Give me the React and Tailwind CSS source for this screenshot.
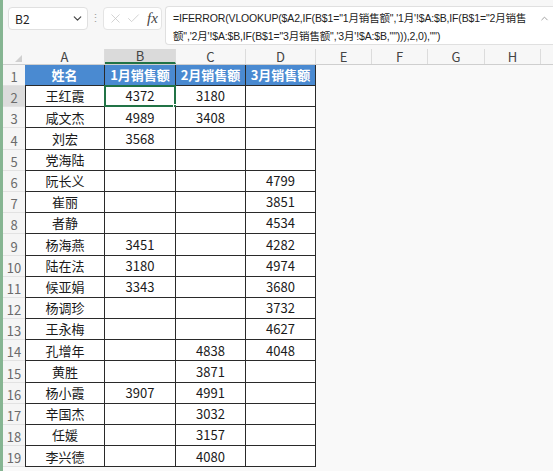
import { ChevronDown, X, Check, ChevronUp } from 'lucide-react';

const FONT = { fontFamily: '"Noto Sans CJK SC", "Noto Sans", sans-serif' };

const cols = [
  { key: 'A', w: 'w-[80px]' },
  { key: 'B', w: 'w-[71px]' },
  { key: 'C', w: 'w-[70px]' },
  { key: 'D', w: 'w-[70px]' },
];

const extraCols = [
  { key: 'E', w: 'w-[56px]' },
  { key: 'F', w: 'w-[56px]' },
  { key: 'G', w: 'w-[57px]' },
  { key: 'H', w: 'w-[56px]' },
];

const header = ['姓名', '1月销售额', '2月销售额', '3月销售额'];

const data = [
  ['王红霞', '4372', '3180', ''],
  ['咸文杰', '4989', '3408', ''],
  ['刘宏', '3568', '', ''],
  ['党海陆', '', '', ''],
  ['阮长义', '', '', '4799'],
  ['崔丽', '', '', '3851'],
  ['者静', '', '', '4534'],
  ['杨海燕', '3451', '', '4282'],
  ['陆在法', '3180', '', '4974'],
  ['候亚娟', '3343', '', '3680'],
  ['杨调珍', '', '', '3732'],
  ['王永梅', '', '', '4627'],
  ['孔增年', '', '4838', '4048'],
  ['黄胜', '', '3871', ''],
  ['杨小霞', '3907', '4991', ''],
  ['辛国杰', '', '3032', ''],
  ['任媛', '', '3157', ''],
  ['李兴德', '', '4080', ''],
];

const RowNum = ({ n, active }) => (
  <div
    className={`w-[22px] shrink-0 h-full flex items-end justify-center text-[13px] leading-[17px] text-[#6b6b6b] border-b border-[#e2e2e2] ${
      active ? 'bg-[#dcdcdc]' : 'bg-[#f5f5f5]'
    }`}
  >
    {n}
  </div>
);

export default function App() {
  return (
    <div className="w-[553px] h-[471px] overflow-hidden flex bg-[#f9f9f9]" style={FONT}>
      {/* green edge */}
      <div className="w-[3px] h-full shrink-0 bg-[#86b592]" />

      <div className="flex-1 flex flex-col min-w-0">
        {/* formula bar */}
        <div className="h-[49px] flex items-start pt-[6px] pl-[5px] bg-[#f7f7f7]">
          <div className="w-[80px] shrink-0 h-[23px] mt-[1px] bg-white border border-[#e0e0e0] rounded-[4px] flex items-center justify-between pl-[6px] pr-[3px]">
            <span className="text-[12px] text-[#222]">B2</span>
            <ChevronDown size={13} strokeWidth={2.2} className="text-[#444]" />
          </div>
          <div className="w-[15px] shrink-0 flex justify-center mt-[5px] text-[#a0a0a0] text-[11px] leading-[12px]">⋮</div>
          <div className="w-[59px] shrink-0 h-[23px] mt-[1px] bg-white border border-[#e4e4e4] rounded-[4px] flex items-center pl-[4px] gap-[3px]">
            <X size={15} strokeWidth={1.2} className="text-[#c4c4c4] shrink-0" />
            <Check size={15} strokeWidth={1.2} className="text-[#c4c4c4] shrink-0" />
            <span
              className="ml-[3px] text-[15px] italic text-[#444]"
              style={{ fontFamily: '"Liberation Serif", serif' }}
            >
              fx
            </span>
          </div>
          <div className="ml-[3px] flex-1 min-w-0 overflow-hidden h-[39px] bg-white border border-[#e0e0e0] rounded-l-[4px] border-r-0 flex justify-between pl-[7px] pr-[3px] pt-[2px]">
            <div
              className="text-[10.5px] leading-[18px] tracking-[-0.15px] text-[#222] whitespace-nowrap"
              style={{ fontFamily: '"Liberation Sans", "Noto Sans CJK SC", sans-serif' }}
            >
              <div>=IFERROR(VLOOKUP($A2,IF(B$1="1月销售额",'1月'!$A:$B,IF(B$1="2月销售</div>
              <div>额",'2月'!$A:$B,IF(B$1="3月销售额",'3月'!$A:$B,""))),2,0),"")</div>
            </div>
            <ChevronUp size={11} className="text-[#999] mt-[4px] shrink-0" />
          </div>
        </div>

        {/* column headers */}
        <div className="h-[16px] flex bg-[#f7f7f7] border-b border-[#cfcfcf]">
          <div className="w-[22px] shrink-0 h-full relative">
            <div className="absolute right-[3px] bottom-[2px] w-0 h-0 border-l-[7px] border-l-transparent border-b-[7px] border-b-[#d0d0d0]" />
          </div>
          {cols.map((c) => (
            <div
              key={c.key}
              className={`${c.w} shrink-0 h-full flex items-center justify-center text-[13px] text-[#444] border-r border-[#dcdcdc] ${
                c.key === 'B' ? 'bg-[#dadada] border-b-2 border-b-[#217346]' : ''
              }`}
            >
              {c.key}
            </div>
          ))}
          {extraCols.map((c) => (
            <div
              key={c.key}
              className={`${c.w} shrink-0 h-full flex items-center justify-center text-[13px] text-[#444] border-r border-[#dcdcdc]`}
            >
              {c.key}
            </div>
          ))}
        </div>

        {/* rows */}
        <div className="flex flex-col">
          <div className="h-[21px] flex">
            <RowNum n={1} />
            {header.map((h, i) => (
              <div
                key={i}
                className={`${cols[i].w} shrink-0 h-full bg-[#4a8ad1] text-white font-bold text-[13px] flex items-center justify-center border-r border-b border-[#2a2a2a]`}
              >
                {h}
              </div>
            ))}
          </div>
          {data.map((row, r) => (
            <div key={r} className="h-[21.2px] flex">
              <RowNum n={r + 2} active={r === 0} />
              {row.map((v, i) => (
                <div
                  key={i}
                  className={`${cols[i].w} shrink-0 h-full bg-white text-[13px] text-[#1a1a1a] flex items-center justify-center border-r border-b border-[#2a2a2a] relative ${
                    i === 0 ? 'border-l' : ''
                  }`}
                >
                  {v}
                  {r === 0 && i === 1 && (
                    <>
                      <div className="absolute -left-px -top-px -right-px -bottom-px border-2 border-[#217346]" />
                      <div className="absolute -right-[4px] -bottom-[4px] w-[6px] h-[6px] bg-[#217346] border border-white" />
                    </>
                  )}
                </div>
              ))}
            </div>
          ))}
        </div>
      </div>
    </div>
  );
}
